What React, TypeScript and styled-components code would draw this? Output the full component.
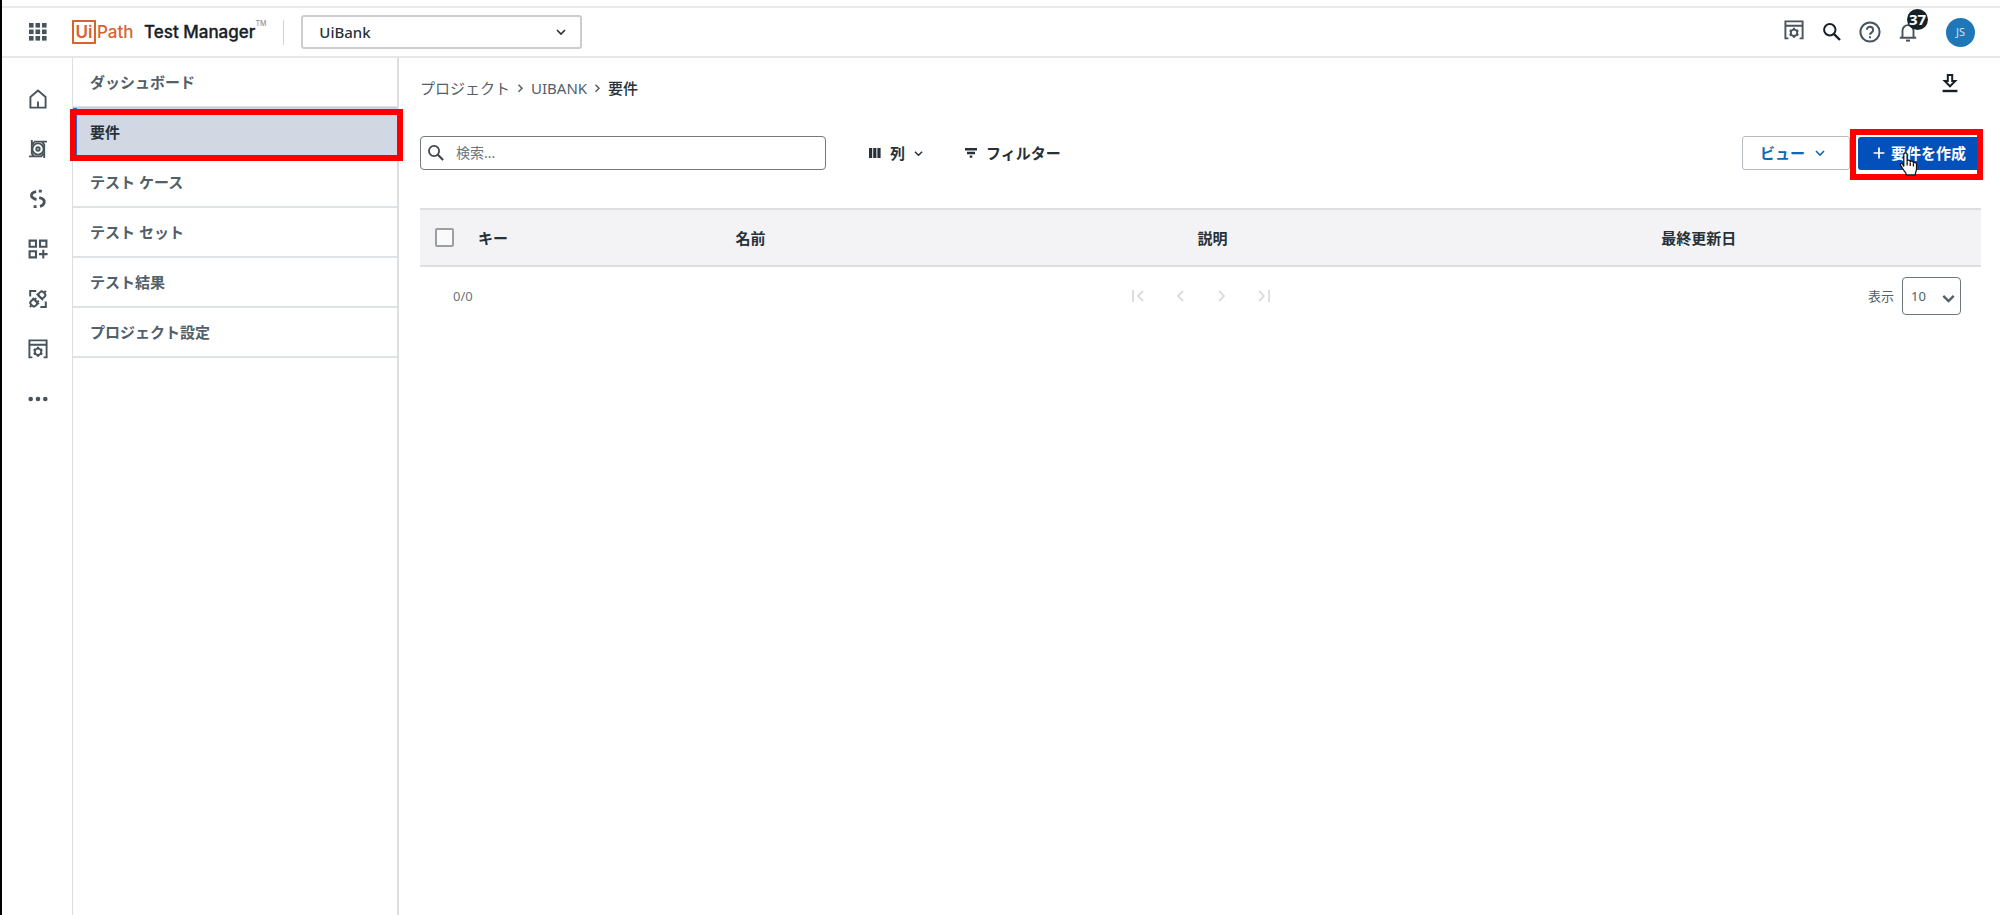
import React from "react";
import styled, { createGlobalStyle, css } from "styled-components";

const GlobalStyle = createGlobalStyle`
  *, *::before, *::after { box-sizing: border-box; }
  body {
    margin: 0;
    background: #fff;
    color: #273139;
    font-family: "Noto Sans", "Noto Sans CJK JP", sans-serif;
    font-size: 15px;
    line-height: 22px;
  }
  button, input, select { font: inherit; color: inherit; }
  svg { display: block; flex: none; }
`;

const Page = styled.div`
  display: flex;
  flex-direction: column;
  min-height: 100vh;
  border-left: 2px solid #000;
`;

const Header = styled.header`
  display: flex;
  align-items: center;
  height: 58px;
  padding: 8px 25px 0 21px;
  border-bottom: 2px solid #e6e7e8;
  background: linear-gradient(#e9eaea, #e9eaea) 0 6px / 100% 2px no-repeat;
`;

const IconButton = styled.button`
  display: flex;
  align-items: center;
  justify-content: center;
  position: relative;
  width: 30px;
  height: 30px;
  padding: 0;
  border: 0;
  background: none;
  color: #48545c;
  cursor: pointer;
  &:disabled { color: #d9dcde; }
`;

const SearchButton = styled(IconButton)`
  color: #182027;
`;

const RaisedButton = styled(IconButton)`
  align-self: flex-start;
`;

const DownloadButton = styled(IconButton)`
  align-self: flex-start;
  height: 20px;
`;

const Brand = styled.a`
  display: flex;
  align-items: center;
  margin-left: 19px;
  font-family: Inter, "Open Sans", sans-serif;
  font-size: 17px;
  font-weight: 500;
  text-decoration: none;
  color: #182027;
`;

const BrandBox = styled.span`
  width: 24px;
  height: 24px;
  border: 2px solid #d9622f;
  color: #d9622f;
  font-weight: 600;
  line-height: 21px;
  text-align: center;
`;

const BrandPath = styled.span`
  width: 48px;
  padding-left: 1px;
  color: #d9622f;
`;

const BrandName = styled.span`
  -webkit-text-stroke: 0.3px currentColor;
`;

const TradeMark = styled.sup`
  align-self: flex-start;
  font-size: 7px;
  line-height: 8px;
  color: #8d9599;
`;

const Divider = styled.span`
  width: 1px;
  height: 25px;
  margin: 0 17px;
  background: #d0d4d7;
`;

const SelectWrap = styled.span`
  display: flex;
  align-items: center;
  position: relative;
  & > svg { position: absolute; pointer-events: none; }
`;

const ProjectSelectWrap = styled(SelectWrap)`
  width: 281px;
  & > svg { right: 16px; }
`;

const ProjectSelect = styled.select`
  appearance: none;
  width: 100%;
  height: 34px;
  padding: 0 16px;
  border: 2px solid #cbcdcf;
  border-radius: 3px;
  background: #fff;
  font-weight: 500;
`;

const HeaderActions = styled.div`
  display: flex;
  align-items: center;
  gap: 8px;
  height: 34px;
  margin-left: auto;
`;

const Count = styled.span`
  position: absolute;
  top: -8px;
  left: 14px;
  width: 21px;
  height: 21px;
  border-radius: 50%;
  background: #182027;
  color: #fff;
  font-size: 15px;
  font-weight: 700;
  line-height: 20px;
  text-align: center;
`;

const Avatar = styled.button`
  width: 29px;
  height: 29px;
  margin-left: 15px;
  padding: 0;
  border: 0;
  border-radius: 50%;
  background: #1f77b8;
  color: #cfe3f2;
  font-size: 11px;
`;

const Body = styled.div`
  display: flex;
  flex: 1;
`;

const Rail = styled.nav`
  display: flex;
  flex-direction: column;
  align-items: center;
  gap: 20px;
  width: 70px;
  padding: 26px 0 0 2px;
  flex: none;
`;

const SideNav = styled.nav`
  width: 327px;
  flex: none;
  border: solid #dcdfe1;
  border-width: 0 2px 0 1px;
`;

const markBox = css`
  content: "";
  position: absolute;
  border: 6px solid #fe0000;
  pointer-events: none;
  z-index: 1;
`;

const SideLink = styled.a<{ $active?: boolean }>`
  display: flex;
  align-items: center;
  position: relative;
  height: 50px;
  padding: 0 17px;
  border-bottom: 2px solid #e0e3e5;
  color: #526069;
  font-weight: 600;
  text-decoration: none;
  ${(p) =>
    p.$active &&
    css`
      background: #d2d8e3;
      color: #273139;
      box-shadow: inset 4px 0 #1c6fd0, 0 -1px #c5ccd4;
      &::after { ${markBox} inset: 1px -6px -5px -3px; }
    `}
`;

const Main = styled.main`
  flex: 1;
  min-width: 0;
  padding: 15px 19px 0 21px;
`;

const TopRow = styled.div`
  display: flex;
  align-items: center;
  justify-content: space-between;
  height: 30px;
  padding-right: 16px;
`;

const Crumbs = styled.nav`
  display: flex;
  align-items: center;
  gap: 7px;
  color: #526069;
  a { color: inherit; text-decoration: none; }
  span { color: #273139; font-weight: 500; }
`;

const Toolbar = styled.div`
  display: flex;
  align-items: center;
  height: 34px;
  margin-top: 33px;
`;

const SearchBox = styled.label`
  display: flex;
  align-items: center;
  gap: 12px;
  width: 406px;
  height: 34px;
  padding: 0 7px;
  margin-right: 43px;
  border: 1px solid #73797d;
  border-radius: 4px;
  color: #40484e;
  input {
    flex: 1;
    min-width: 0;
    padding: 0;
    border: 0;
    outline: 0;
    background: none;
    font-size: 14px;
  }
  input::placeholder { color: #6b767d; opacity: 1; }
`;

const TextButton = styled.button`
  display: flex;
  align-items: center;
  gap: 9px;
  margin-right: 42px;
  padding: 0;
  border: 0;
  background: none;
  color: #273139;
  font-weight: 600;
`;

const Spacer = styled.span`
  flex: 1;
`;

const ViewButton = styled.button`
  display: flex;
  align-items: center;
  gap: 10px;
  width: 108px;
  height: 34px;
  padding: 0 0 0 17px;
  border: 1px solid #b4babd;
  border-radius: 3px;
  background: #fff;
  color: #0f67b8;
  font-weight: 600;
`;

const CreateButton = styled.button`
  display: flex;
  align-items: center;
  gap: 6px;
  position: relative;
  width: 123px;
  height: 33px;
  margin-left: 8px;
  padding: 0 0 0 15px;
  border: 0;
  border-radius: 3px;
  background: #0450bb;
  color: #fff;
  font-weight: 700;
  white-space: nowrap;
  &::after { ${markBox} inset: -8px -2px -10px -8px; }
`;

const Pointer = styled.svg`
  position: absolute;
  left: 41px;
  top: 15px;
  z-index: 2;
`;

const Table = styled.table`
  width: 100%;
  margin-top: 38px;
  border-collapse: collapse;
  table-layout: fixed;
  background: #f3f3f6;
  th {
    height: 57px;
    padding: 0;
    border: solid #dcdee0;
    border-width: 2px 0;
    font-weight: 600;
    text-align: left;
  }
`;

const Col = styled.col<{ $width?: string }>`
  width: ${(p) => p.$width ?? "auto"};
`;

const Check = styled.input`
  appearance: none;
  display: block;
  width: 19px;
  height: 19px;
  margin: 0 0 0 15px;
  border: 2px solid #9b9fa3;
  border-radius: 2px;
  background: #fafafb;
`;

const Footer = styled.footer`
  display: grid;
  grid-template-columns: 1fr auto 1fr;
  align-items: center;
  height: 38px;
  margin-top: 10px;
  padding: 0 20px 0 33px;
  color: #6b767d;
  font-size: 13px;
`;

const Pager = styled.div`
  display: flex;
  gap: 12px;
  margin-right: 13px;
`;

const PageSize = styled.label`
  display: flex;
  align-items: center;
  justify-content: flex-end;
  gap: 8px;
  color: #526069;
`;

const SizeWrap = styled(SelectWrap)`
  width: 59px;
  & > svg { right: 6px; top: 15px; }
`;

const SizeSelect = styled.select`
  appearance: none;
  width: 100%;
  height: 38px;
  padding: 0 8px;
  border: 1px solid #6f777d;
  border-radius: 4px;
  background: #fff;
`;

const Chevron = ({ w = 10, stroke = 1.6 }: { w?: number; stroke?: number }) => (
  <svg width={w} height={w} viewBox="0 0 10 10" fill="none" stroke="currentColor" strokeWidth={stroke}>
    <path d="M1 3l4 4 4-4" />
  </svg>
);

const CrumbArrow = () => (
  <svg width="7" height="10" viewBox="0 0 7 10" fill="none" stroke="#526069" strokeWidth="1.5">
    <path d="M1.5 1.8l3.500 3.500-3.500 3.500" />
  </svg>
);

const AppsIcon = () => (
  <svg width="18" height="18" viewBox="0 0 18 18" fill="#48545c">
    {[0, 6.5, 13].map((y) => [0, 6.5, 13].map((x) => <rect key={`${x}-${y}`} x={x} y={y} width="4.6" height="4.6" />))}
  </svg>
);

const MagnifierIcon = ({ size }: { size: number }) => (
  <svg width={size} height={size} viewBox="0 0 18 18" fill="none" stroke="currentColor" strokeWidth="2">
    <circle cx="6.8" cy="6.8" r="5.7" />
    <path d="M10.8 10.8l6.2 6.2" strokeWidth="2.4" />
  </svg>
);

const WindowGearIcon = () => (
  <svg width="20" height="20" viewBox="0 0 20 20" fill="none" stroke="currentColor" strokeWidth="1.9">
    <path d="M4.4 18.4H1.4V1.4h17.200v17h-3M1.4 5.700h17.200" />
    <circle cx="10" cy="12.8" r="3.2" />
    <path d="M10 7.800v2M10 15.800v2M5.700 10.300l1.700 1M12.600 14.300l1.700 1M5.700 15.300l1.700-1M12.600 11.300l1.700-1" strokeWidth="2.2" />
  </svg>
);

const HelpIcon = () => (
  <svg width="22" height="22" viewBox="0 0 22 22" fill="none" stroke="currentColor" strokeWidth="2">
    <circle cx="11" cy="11" r="9.6" />
    <path d="M7.9 8.8a3.1 3.1 0 1 1 4.9 2.5c-1.1.8-1.8 1.3-1.8 2.5" />
    <path d="M11 15.2v2.1" />
  </svg>
);

const BellIcon = () => (
  <svg width="18" height="20" viewBox="0 0 18 20" fill="none" stroke="currentColor" strokeWidth="1.9">
    <path d="M.8 15.8h16.4M3.5 15.8V8.6a5.5 5.5 0 0 1 11 0v7.2" />
    <path d="M7 18.6h4" strokeWidth="2" />
  </svg>
);

const HomeIcon = () => (
  <svg width="18" height="20" viewBox="0 0 18 20" fill="none" stroke="currentColor" strokeWidth="1.9">
    <path d="M1.4 8L9 1.600 16.600 8v10.600H1.400z" />
    <path d="M9 12.6v5.9" />
  </svg>
);

const FrameIcon = () => (
  <svg width="18" height="18" viewBox="0 0 18 18" fill="none" stroke="currentColor" strokeWidth="1.9">
    <path d="M2.800 0v13.500L5 16.300M0 16.400h13M15.200 18V4.500L13 1.700M5 1.600h13M2.800 5L5.400 2M15.200 13l-2.600 3" />
    <circle cx="9" cy="9" r="5.6" />
    <circle cx="9" cy="9" r="1.7" />
  </svg>
);

const OrchestratorIcon = () => (
  <svg width="18" height="20" viewBox="0 0 18 20" fill="none" stroke="currentColor" strokeWidth="2.8">
    <path d="M7.200 2.600C3.600 3 1.900 5.200 2.500 7.300c.7 2 2.600 2.600 5 3.400" />
    <path d="M10.200 8.600c3.600.8 5.500 2.600 5 5-.4 2.200-1.700 3.300-4.200 3.800" />
    <path d="M9.800 2.200h3M4.600 17.600h3" />
  </svg>
);

const GridPlusIcon = () => (
  <svg width="20" height="20" viewBox="0 0 20 20" fill="none" stroke="currentColor" strokeWidth="2.1">
    <path d="M1.600 1.600h6.400v6.200H1.600zM12 1.600h6.400v6.200H12zM1.600 12.200h6.400v6.200H1.600zM15.300 10.800v8.600M11 15.100h8.600" />
  </svg>
);

const PlugsIcon = () => (
  <svg width="20" height="20" viewBox="0 0 20 20" fill="none" stroke="currentColor" strokeWidth="2">
    <path d="M8.200 2H2.200v5.400M17.800 12.600V18h-5.400" />
    <g transform="rotate(45 14 5.800)">
      <rect x="10.8" y="3" width="6.4" height="5.8" rx="2.2" />
      <path d="M9.600 8.800h8.800M14 3V.2" />
    </g>
    <g transform="rotate(45 5.800 14)">
      <rect x="2.6" y="11.2" width="6.4" height="5.8" rx="2.2" />
      <path d="M1.400 11.200h8.800M4 11V8.800M7.600 11V8.800M5.800 17v2.600" />
    </g>
  </svg>
);

const MoreIcon = () => (
  <svg width="20" height="6" viewBox="0 0 20 6" fill="currentColor">
    <circle cx="2.7" cy="3" r="2.3" />
    <circle cx="10" cy="3" r="2.3" />
    <circle cx="17.3" cy="3" r="2.3" />
  </svg>
);

const DownloadIcon = () => (
  <svg width="16" height="20" viewBox="0 0 16 20" fill="none" stroke="#182027" strokeWidth="2">
    <path d="M5.800 1.900h4.400v6.200h3L8 13.300 2.800 8.100h3z" />
    <path d="M.6 18h14.800" strokeWidth="2.4" />
  </svg>
);

const ColumnsIcon = () => (
  <svg width="12" height="10" viewBox="0 0 12 10" fill="currentColor">
    <path d="M0 0h3.200v10H0zM4.200 0h3.200v10H4.200zM8.400 0h3.200v10H8.400z" />
  </svg>
);

const FilterIcon = () => (
  <svg width="12" height="10" viewBox="0 0 12 10" fill="currentColor">
    <path d="M0 0h12v2.400H0zM2 3.800h8v2.400H2zM4.700 7.600h2.600v2.200H4.700z" />
  </svg>
);

const PlusIcon = () => (
  <svg width="12" height="12" viewBox="0 0 12 12" stroke="currentColor" strokeWidth="1.7">
    <path d="M6 .6v10.800M.6 6h10.800" />
  </svg>
);

const pagerButtons = [
  { label: "最初のページ", d: "M2 1v12M12 2L7 7l5 5" },
  { label: "前のページ", d: "M10 2L5 7l5 5" },
  { label: "次のページ", d: "M4 2l5 5-5 5" },
  { label: "最後のページ", d: "M2 2l5 5-5 5M12 1v12" },
];

const railItems = [
  { label: "ホーム", icon: <HomeIcon /> },
  { label: "Studio", icon: <FrameIcon /> },
  { label: "Orchestrator", icon: <OrchestratorIcon /> },
  { label: "Apps", icon: <GridPlusIcon /> },
  { label: "Integration", icon: <PlugsIcon /> },
  { label: "管理", icon: <WindowGearIcon /> },
  { label: "その他", icon: <MoreIcon /> },
];

const sections = ["ダッシュボード", "要件", "テスト ケース", "テスト セット", "テスト結果", "プロジェクト設定"];

export default function App() {
  return (
    <Page>
      <GlobalStyle />
      <Header>
        <IconButton aria-label="アプリ"><AppsIcon /></IconButton>
        <Brand href="#">
          <BrandBox>Ui</BrandBox>
          <BrandPath>Path</BrandPath>
          <BrandName>Test Manager</BrandName>
          <TradeMark>TM</TradeMark>
        </Brand>
        <Divider />
        <ProjectSelectWrap>
          <ProjectSelect aria-label="プロジェクト"><option>UiBank</option></ProjectSelect>
          <Chevron />
        </ProjectSelectWrap>
        <HeaderActions>
          <RaisedButton aria-label="管理"><WindowGearIcon /></RaisedButton>
          <SearchButton aria-label="検索"><MagnifierIcon size={18} /></SearchButton>
          <IconButton aria-label="ヘルプ"><HelpIcon /></IconButton>
          <IconButton aria-label="通知"><BellIcon /><Count>37</Count></IconButton>
          <Avatar>JS</Avatar>
        </HeaderActions>
      </Header>
      <Body>
        <Rail>
          {railItems.map((item) => (
            <IconButton key={item.label} aria-label={item.label}>{item.icon}</IconButton>
          ))}
        </Rail>
        <SideNav>
          {sections.map((name) => (
            <SideLink key={name} href="#" $active={name === "要件"}>{name}</SideLink>
          ))}
        </SideNav>
        <Main>
          <TopRow>
            <Crumbs>
              <a href="#">プロジェクト</a>
              <CrumbArrow />
              <a href="#">UIBANK</a>
              <CrumbArrow />
              <span>要件</span>
            </Crumbs>
            <DownloadButton aria-label="ダウンロード"><DownloadIcon /></DownloadButton>
          </TopRow>
          <Toolbar>
            <SearchBox>
              <MagnifierIcon size={16} />
              <input type="text" aria-label="検索" placeholder="検索..." />
            </SearchBox>
            <TextButton><ColumnsIcon />列<Chevron w={9} /></TextButton>
            <TextButton><FilterIcon />フィルター</TextButton>
            <Spacer />
            <ViewButton>ビュー<Chevron /></ViewButton>
            <CreateButton>
              <PlusIcon />要件を作成
              <Pointer width="20" height="24" viewBox="0 0 18 23" fill="#fff" stroke="#111" strokeWidth="1.2">
                <path d="M4 14V2.500a1.500 1.500 0 0 1 3.200 0V9c0-1.600 3-1.600 3 .2v.6c0-1.500 3-1.400 3 .4v.8c.2-1.400 3-1.200 3 .6V16c0 2.500-1.200 3.500-1.200 6H6.500c0-2-1.500-2.800-3-5.200L.8 12.600c-.6-1.500 1.200-2.200 2.200-1z" />
                <path d="M7.200 9v4M10.200 10v3.500M13.200 11v3" fill="none" />
              </Pointer>
            </CreateButton>
          </Toolbar>
          <Table>
            <colgroup>
              <Col $width="58px" />
              <Col $width="16.5%" />
              <Col $width="29.6%" />
              <Col $width="29.7%" />
              <Col />
            </colgroup>
            <thead>
              <tr>
                <th><Check type="checkbox" aria-label="すべて選択" /></th>
                <th>キー</th>
                <th>名前</th>
                <th>説明</th>
                <th>最終更新日</th>
              </tr>
            </thead>
          </Table>
          <Footer>
            <span>0/0</span>
            <Pager>
              {pagerButtons.map((b) => (
                <IconButton key={b.label} aria-label={b.label} disabled>
                  <svg width="14" height="14" viewBox="0 0 14 14" fill="none" stroke="currentColor" strokeWidth="1.8">
                    <path d={b.d} />
                  </svg>
                </IconButton>
              ))}
            </Pager>
            <PageSize>
              表示
              <SizeWrap>
                <SizeSelect><option>10</option></SizeSelect>
                <Chevron w={13} stroke={1.8} />
              </SizeWrap>
            </PageSize>
          </Footer>
        </Main>
      </Body>
    </Page>
  );
}
